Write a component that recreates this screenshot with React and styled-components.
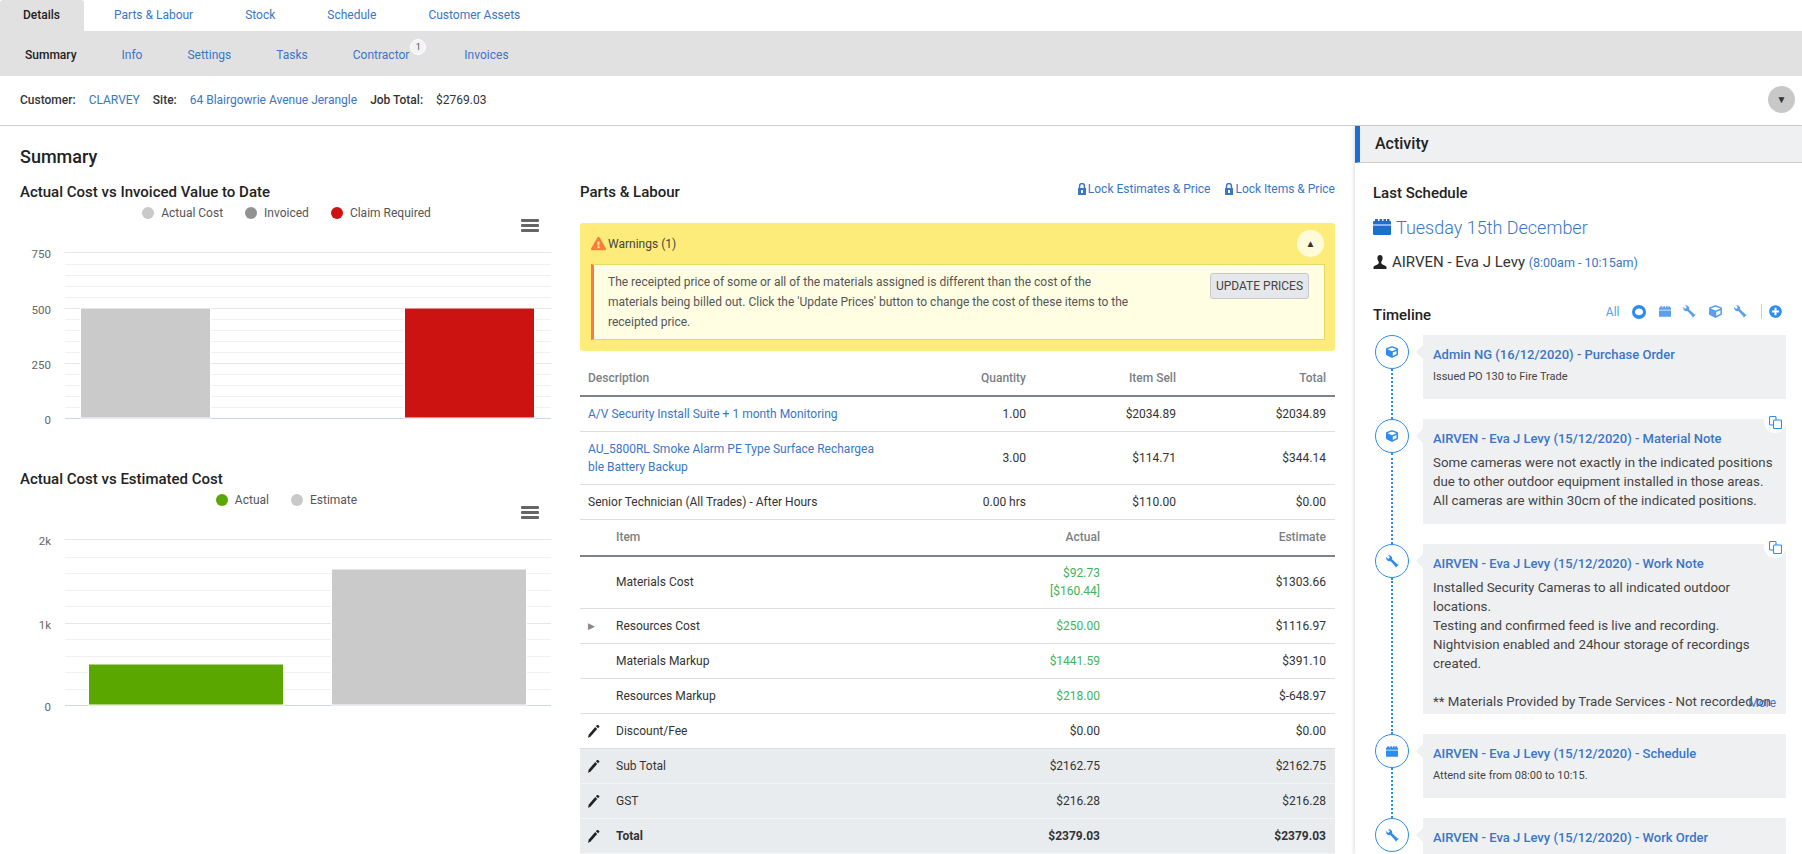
import React from "react";
import styled, { createGlobalStyle } from "styled-components";
import { FaCube, FaPlusCircle, FaExclamationTriangle } from "react-icons/fa";

const GlobalStyle = createGlobalStyle`
  html, body {
    margin: 0;
    padding: 0;
    height: 100%;
    overflow: hidden;
    background: #fff;
    font-family: Roboto, "Liberation Sans", sans-serif;
    font-size: 12px;
    color: #333;
  }
  * { box-sizing: border-box; }
`;

const LINK = "#3a76c8";
const ICON = "#2d8cf0";

const Page = styled.div`
  width: 1802px;
  height: 854px;
  overflow: hidden;
  display: flex;
  flex-direction: column;
`;

const TabBar = styled.div`
  display: flex;
  height: 31px;
  flex-shrink: 0;
`;

const Tab = styled.div`
  padding: 0 26px;
  line-height: 31px;
  font-size: 12px;
  white-space: nowrap;
  color: ${LINK};
  &:nth-child(2) {
    margin-left: 4px;
  }
`;

const ActiveTab = styled(Tab)`
  width: 84px;
  padding: 0 0 0 23px;
  color: #222;
  font-weight: 500;
  background: #e1e1e1;
  border-radius: 3px 3px 0 0;
`;

const SubBar = styled.div`
  display: flex;
  height: 45px;
  background: #e1e1e1;
  flex-shrink: 0;
  padding: 2px 0 0 25px;
  gap: 45px;
  align-items: center;
`;

const SubTab = styled.div`
  position: relative;
  font-size: 12px;
  color: ${(p) => (p.$active ? "#222" : LINK)};
  font-weight: ${(p) => (p.$active ? 500 : 400)};
  margin-right: ${(p) => (p.$badge ? 10 : 0)}px;
`;

const Badge = styled.span`
  position: absolute;
  top: -9px;
  right: -17px;
  width: 16px;
  height: 16px;
  border-radius: 50%;
  background: #f1f3f5;
  border: 1px solid #fff;
  color: #555;
  font-size: 9px;
  line-height: 14px;
  text-align: center;
`;

const InfoBar = styled.div`
  display: flex;
  height: 50px;
  flex-shrink: 0;
  align-items: center;
  padding: 0 7px 1px 20px;
  border-bottom: 1px solid #cfcfcf;
  font-size: 12px;
`;

const InfoLabel = styled.span`
  font-weight: 500;
  color: #333;
  margin-right: 13px;
`;

const InfoLink = styled.span`
  color: ${LINK};
  margin-right: 13px;
`;

const InfoValue = styled.span`
  color: #333;
`;

const RoundToggle = styled.div`
  width: 27px;
  height: 27px;
  border-radius: 50%;
  background: ${(p) => p.$bg};
  color: #333;
  display: flex;
  align-items: center;
  justify-content: center;
  font-size: 10px;
  margin-left: auto;
  margin-bottom: ${(p) => p.$mb || 0}px;
  flex-shrink: 0;
`;

const Body = styled.div`
  flex: 1;
  display: flex;
  min-height: 0;
`;

const Main = styled.div`
  width: 1355px;
  flex-shrink: 0;
  padding: 20px 20px 0 20px;
`;

const PageTitle = styled.h1`
  margin: 0;
  font-size: 18px;
  font-weight: 500;
  color: #222;
  line-height: 21px;
`;

const Columns = styled.div`
  display: flex;
  margin-top: 15px;
`;

const LeftCol = styled.div`
  width: 540px;
  flex-shrink: 0;
`;

const RightCol = styled.div`
  width: 755px;
  margin-left: 20px;
  flex-shrink: 0;
`;

const ChartBlock = styled.div`
  height: 287px;
`;

const SectionTitle = styled.h3`
  margin: 0;
  font-size: 15px;
  font-weight: 500;
  color: #222;
  line-height: 20px;
`;

const Legend = styled.div`
  display: flex;
  justify-content: center;
  gap: 22px;
  height: 20px;
  align-items: center;
  margin-top: 1px;
  padding-right: 7px;
  color: #555;
  font-size: 12px;
`;

const LegendItem = styled.div`
  display: flex;
  align-items: center;
  gap: 7px;
`;

const Dot = styled.span`
  width: 12px;
  height: 12px;
  border-radius: 50%;
  background: ${(p) => p.$c};
`;

const ChartSvg = styled.svg`
  display: block;
  width: 540px;
  overflow: visible;
`;

const AxisLabel = styled.text`
  font-size: 11.5px;
  fill: #666;
  text-anchor: end;
`;

const PartsHead = styled.div`
  display: flex;
  justify-content: space-between;
  height: 41px;
`;

const LockLinks = styled.div`
  display: flex;
  align-items: flex-start;
  gap: 15px;
  color: ${LINK};
  font-size: 12px;
  line-height: 14px;
`;

const LockLink = styled.span`
  display: flex;
  align-items: center;
  gap: 2px;
`;

const WarnBox = styled.div`
  background: #feec7a;
  border-radius: 3px;
  height: 128px;
  padding: 0 10px 0 11px;
`;

const WarnHead = styled.div`
  display: flex;
  align-items: center;
  height: 41px;
  gap: 2px;
  padding: 0 1px 0 0;
  font-size: 12px;
  color: #444;
`;

const WarnBody = styled.div`
  display: flex;
  height: 76px;
  background: #fffee3;
  border: 1px solid #e3d96b;
  border-left: 3px solid #fb7a3c;
  padding: 8px 15px 0 14px;
  justify-content: space-between;
`;

const WarnText = styled.p`
  margin: -1px 0 0;
  width: 535px;
  font-size: 12px;
  line-height: 20px;
  color: #555;
`;

const UpdateBtn = styled.button`
  width: 99px;
  height: 26px;
  background: #e6e7ea;
  border: 1px solid #c6c8cc;
  border-radius: 3px;
  font-family: inherit;
  font-size: 12px;
  color: #444;
  padding: 0;
`;

const Table = styled.table`
  width: 100%;
  margin-top: ${(p) => p.$mt || 0}px;
  border-collapse: collapse;
  table-layout: fixed;
  font-size: 12px;
`;

const Col = styled.col`
  width: ${(p) => p.$w}px;
`;

const Th = styled.th`
  height: 36px;
  padding: ${(p) => (p.$flush ? "0 9px 0 0" : "0 9px 0 8px")};
  text-align: ${(p) => (p.$right ? "right" : "left")};
  font-weight: 500;
  color: #7b7f83;
  border-bottom: 2px solid #7f8386;
`;

const Row = styled.tr`
  background: ${(p) => (p.$shade ? "#e9ecef" : "transparent")};
  border-bottom: 1px solid ${(p) => (p.$shade ? "#f4f5f6" : "#dedede")};
`;

const Td = styled.td`
  height: ${(p) => p.$h || 35}px;
  padding: ${(p) => (p.$flush ? "0 9px 0 0" : "0 9px 0 8px")};
  text-align: ${(p) => (p.$right ? "right" : "left")};
  color: ${(p) => (p.$green ? "#41b35b" : p.$link ? LINK : "#333")};
  font-weight: ${(p) => (p.$bold ? 700 : 400)};
  line-height: 18px;
  word-break: break-all;
`;

const IconCell = styled.span`
  display: inline-flex;
  color: ${(p) => p.$c || "#222"};
  font-size: ${(p) => p.$s || 12}px;
  vertical-align: middle;
`;

const Panel = styled.div`
  flex: 1;
  box-shadow: -2px 0 3px rgba(0, 0, 0, 0.09);
  min-width: 0;
`;

const PanelHead = styled.div`
  height: 37px;
  background: #eff0f2;
  border-left: 5px solid #1b6fd1;
  border-bottom: 1px solid #cfcfcf;
  padding-left: 15px;
  line-height: 35px;
  font-size: 16px;
  font-weight: 500;
  color: #222;
`;

const PanelBody = styled.div`
  padding: 20px 16px 0 18px;
`;

const PanelTitle = styled.div`
  font-size: 15px;
  font-weight: 500;
  color: #222;
  line-height: 20px;
`;

const ScheduleDate = styled.div`
  display: flex;
  align-items: center;
  gap: 5px;
  margin-top: 12px;
  height: 24px;
  font-size: 18px;
  font-weight: 300;
  color: ${LINK};
`;

const ScheduleWho = styled.div`
  display: flex;
  align-items: center;
  gap: 5px;
  margin-top: 12px;
  height: 22px;
  font-size: 15px;
  color: #333;
`;

const ScheduleTime = styled.span`
  font-size: 12.5px;
  color: ${LINK};
`;

const TimelineHead = styled.div`
  display: flex;
  align-items: center;
  justify-content: space-between;
  margin-top: 32px;
  height: 20px;
  padding-right: 4px;
`;

const FilterRow = styled.div`
  display: flex;
  align-items: center;
  gap: 12.5px;
  color: #5aa0f2;
  font-size: 12px;
  margin-top: -7px;
`;

const Separator = styled.span`
  width: 1px;
  height: 15px;
  background: #ccc;
  margin: 0 -5px 0 1px;
`;

const Timeline = styled.div`
  margin-top: 10px;
  display: flex;
  flex-direction: column;
  gap: 20px;
`;

const Entry = styled.div`
  display: flex;
  position: relative;
`;

const NodeCol = styled.div`
  width: 50px;
  flex-shrink: 0;
  padding-left: 2px;
  position: relative;
`;

const Node = styled.div`
  width: 34px;
  height: 34px;
  border: 1.5px solid #2d8cf0;
  border-radius: 50%;
  display: flex;
  align-items: center;
  justify-content: center;
  background: #fff;
  color: ${ICON};
  font-size: 12px;
`;

const Connector = styled.div`
  position: absolute;
  left: 18px;
  top: 34px;
  bottom: -20px;
  border-left: 2px dotted #2d8cf0;
`;

const Card = styled.div`
  position: relative;
  flex: 1;
  min-width: 0;
  height: ${(p) => p.$h}px;
  background: #eff0f2;
  padding: 11px 10px 4px 10px;
  &::before {
    content: "";
    position: absolute;
    left: -7px;
    top: 10px;
    border-top: 7px solid transparent;
    border-bottom: 7px solid transparent;
    border-right: 7px solid #eff0f2;
  }
`;

const CardClip = styled.div`
  overflow: hidden;
  height: 100%;
`;

const CardTitle = styled.div`
  color: ${LINK};
  font-size: 13px;
  font-weight: 500;
  line-height: 18px;
`;

const CardNote = styled.div`
  font-size: ${(p) => (p.$small ? 11 : 13.3)}px;
  line-height: 19px;
  color: #444;
  margin-top: ${(p) => (p.$small ? 3 : 5)}px;
  white-space: pre-line;
`;

const CopyBtn = styled.span`
  position: absolute;
  top: -8px;
  right: 0;
  width: 22px;
  height: 22px;
  border-radius: 50%;
  background: #fff;
  color: ${ICON};
  display: flex;
  align-items: center;
  justify-content: center;
`;

const More = styled.span`
  position: absolute;
  right: 10px;
  bottom: 4px;
  font-size: 12px;
  color: ${LINK};
`;

const Hamburger = styled.svg`
  position: absolute;
  top: -4px;
  right: 21px;
`;

const ChartWrap = styled.div`
  position: relative;
`;

const CalendarIcon = ({ w = 12, h = 11, color = "currentColor" }) => (
  <svg width={w} height={h} viewBox="0 0 18 16" fill={color}>
    <path d="M0 6.5h18V15a1 1 0 0 1-1 1H1a1 1 0 0 1-1-1z" />
    <path d="M0 3a1 1 0 0 1 1-1h1V0h3v2h1.5V0h2.700v2h1.300V0H13v2h1V0h2.500v2h.5a1 1 0 0 1 1 1v2.500H0z" />
  </svg>
);

const LockIcon = () => (
  <svg width="8" height="12" viewBox="0 0 8 12" fill={LINK}>
    <path d="M.8 5V3a3.200 3.200 0 0 1 6.400 0v2h.8v7H0V5zm1.500 0h3.400V3a1.700 1.700 0 0 0-3.400 0z" />
    <rect x="3" y="7" width="2" height="3" fill="#fff" />
  </svg>
);

const UserIcon = () => (
  <svg width="14" height="14" viewBox="0 0 14 14" fill="#222">
    <path d="M7 0c1.500 0 2.600 1.200 2.600 3 0 1.400-.5 2.800-1.300 3.600v1.700c.4 1.500 4.700 2.200 5.200 3.700v2H.5v-2c.5-1.500 4.800-2.200 5.200-3.700V6.600C4.900 5.800 4.400 4.400 4.400 3 4.400 1.200 5.500 0 7 0z" />
  </svg>
);

const PencilIcon = () => (
  <svg width="12" height="13" viewBox="0 0 12 13" fill="currentColor">
    <path d="M0 13l.8-3.600 6.400-7.300 2 1.800-6.400 7.300z" />
    <path d="M7.900 1.300L9 0c.3-.2.7-.2 1 0l1.200 1c.3.300.3.700.1 1l-1.200 1.300z" />
  </svg>
);

const RingIcon = () => (
  <svg width="14" height="14" viewBox="0 0 14 14">
    <circle cx="7" cy="7" r="7" fill="#2d8cf0" />
    <path
      fill="#fff"
      transform="translate(7 7) scale(.85) translate(-7 -7)"
      d="M7 2.600l1.300.8 1.500-.2.700 1.400 1.300.8-.3 1.500.3 1.500-1.300.7-.7 1.300-1.500-.1-1.300.8-1.300-.8-1.500.1-.7-1.300-1.300-.7.3-1.500-.3-1.500 1.300-.8.7-1.400 1.500.2z"
    />
  </svg>
);

const CopyIcon = () => (
  <svg width="13" height="13" viewBox="0 0 13 13" fill="none" stroke="currentColor" strokeWidth="1.100">
    <path d="M4.500 9H1.500a1 1 0 0 1-1-1V1.500a1 1 0 0 1 1-1H6a1 1 0 0 1 1 1V4" />
    <rect x="4.500" y="4" width="8" height="8.500" rx="1" />
  </svg>
);

const Wrench = ({ size = 13 }) => (
  <svg width={size} height={size} viewBox="0 0 14 14" fill="currentColor">
    <path d="M.4 2.200L2.400 4.200 4.200 2.400 2.200.4A3.400 3.400 0 0 1 6.500 4.700L12.500 10.200 13.800 10 13 11.200 11.200 13 10 13.800 10.200 12.500 4.700 6.500A3.400 3.400 0 0 1 .4 2.200z" />
  </svg>
);

const Chart = ({ height, axis, minor, bars }) => (
  <ChartSvg height={height} viewBox={`0 0 540 ${height}`}>
    {minor.map((y) => (
      <line key={y} x1="45" x2="531" y1={y} y2={y} stroke="#f1f1f1" strokeWidth="1" />
    ))}
    {axis.map((a) => (
      <g key={a.label}>
        <line x1="45" x2="531" y1={a.y} y2={a.y} stroke={a.base ? "#ccd6eb" : "#e6e6e6"} strokeWidth="1" />
        <AxisLabel x="31" y={a.y + 5}>
          {a.label}
        </AxisLabel>
      </g>
    ))}
    {bars.map((b) => (
      <rect key={b.x} x={b.x} y={b.y} width={b.w} height={b.h} fill={b.c} stroke="#fff" strokeWidth="1" />
    ))}
  </ChartSvg>
);

const Menu = () => (
  <Hamburger width="18" height="14" viewBox="0 0 18 14" fill="#666">
    <rect y="0" width="18" height="3" rx="1" />
    <rect y="5" width="18" height="3" rx="1" />
    <rect y="10" width="18" height="3" rx="1" />
  </Hamburger>
);

const costRows = [
  { label: "Resources Cost", actual: "$250.00", est: "$1116.97", green: true, arrow: true },
  { label: "Materials Markup", actual: "$1441.59", est: "$391.10", green: true },
  { label: "Resources Markup", actual: "$218.00", est: "$-648.97", green: true },
  { label: "Discount/Fee", actual: "$0.00", est: "$0.00", pencil: true },
  { label: "Sub Total", actual: "$2162.75", est: "$2162.75", pencil: true, shade: true },
  { label: "GST", actual: "$216.28", est: "$216.28", pencil: true, shade: true },
  { label: "Total", actual: "$2379.03", est: "$2379.03", pencil: true, shade: true, bold: true },
];

const entries = [
  {
    h: 64,
    icon: <FaCube size={12} />,
    title: "Admin NG (16/12/2020) - Purchase Order",
    small: true,
    text: "Issued PO 130 to Fire Trade",
  },
  {
    h: 105,
    icon: <FaCube size={12} />,
    copy: true,
    title: "AIRVEN - Eva J Levy (15/12/2020) - Material Note",
    text: "Some cameras were not exactly in the indicated positions due to other outdoor equipment installed in those areas.\nAll cameras are within 30cm of the indicated positions.",
  },
  {
    h: 170,
    icon: <Wrench />,
    copy: true,
    more: true,
    title: "AIRVEN - Eva J Levy (15/12/2020) - Work Note",
    text: "Installed Security Cameras to all indicated outdoor locations.\nTesting and confirmed feed is live and recording.\nNightvision enabled and 24hour storage of recordings created.\n\n** Materials Provided by Trade Services - Not recorded on",
  },
  {
    h: 64,
    icon: <CalendarIcon />,
    title: "AIRVEN - Eva J Levy (15/12/2020) - Schedule",
    small: true,
    text: "Attend site from 08:00 to 10:15.",
  },
  {
    h: 64,
    icon: <Wrench />,
    title: "AIRVEN - Eva J Levy (15/12/2020) - Work Order",
    small: true,
    text: "",
    last: true,
  },
];

export default function App() {
  return (
    <Page>
      <GlobalStyle />
      <TabBar>
        <ActiveTab>Details</ActiveTab>
        <Tab>Parts &amp; Labour</Tab>
        <Tab>Stock</Tab>
        <Tab>Schedule</Tab>
        <Tab>Customer Assets</Tab>
      </TabBar>
      <SubBar>
        <SubTab $active>Summary</SubTab>
        <SubTab>Info</SubTab>
        <SubTab>Settings</SubTab>
        <SubTab>Tasks</SubTab>
        <SubTab $badge>Contractor<Badge>1</Badge></SubTab>
        <SubTab>Invoices</SubTab>
      </SubBar>
      <InfoBar>
        <InfoLabel>Customer:</InfoLabel>
        <InfoLink>CLARVEY</InfoLink>
        <InfoLabel>Site:</InfoLabel>
        <InfoLink>64 Blairgowrie Avenue Jerangle</InfoLink>
        <InfoLabel>Job Total:</InfoLabel>
        <InfoValue>$2769.03</InfoValue>
        <RoundToggle $bg="#c8c8c8" $mb={2}>▼</RoundToggle>
      </InfoBar>
      <Body>
        <Main>
          <PageTitle>Summary</PageTitle>
          <Columns>
            <LeftCol>
              <ChartBlock>
                <SectionTitle>Actual Cost vs Invoiced Value to Date</SectionTitle>
                <Legend>
                  <LegendItem><Dot $c="#c9c9c9" />Actual Cost</LegendItem>
                  <LegendItem><Dot $c="#929292" />Invoiced</LegendItem>
                  <LegendItem><Dot $c="#cd1212" />Claim Required</LegendItem>
                </Legend>
                <ChartWrap>
                  <Menu />
                  <Chart
                    height={200}
                    axis={[
                      { label: "750", y: 29.5 },
                      { label: "500", y: 85.5 },
                      { label: "250", y: 140.5 },
                      { label: "0", y: 195.5, base: true },
                    ]}
                    minor={[41, 52, 63, 74, 96, 107, 118, 129, 151, 162, 173, 184].map((v) => v + 0.5)}
                    bars={[
                      { x: 60.5, y: 85, w: 130, h: 110, c: "#cacaca" },
                      { x: 384.5, y: 85, w: 130, h: 110, c: "#cd1212" },
                    ]}
                  />
                </ChartWrap>
              </ChartBlock>
              <SectionTitle>Actual Cost vs Estimated Cost</SectionTitle>
              <Legend>
                <LegendItem><Dot $c="#5aa700" />Actual</LegendItem>
                <LegendItem><Dot $c="#c9c9c9" />Estimate</LegendItem>
              </Legend>
              <ChartWrap>
                <Menu />
                <Chart
                  height={200}
                  axis={[
                    { label: "2k", y: 29.5 },
                    { label: "1k", y: 113.5 },
                    { label: "0", y: 195.5, base: true },
                  ]}
                  minor={[47, 63, 80, 96, 129, 146, 162, 179].map((v) => v + 0.5)}
                  bars={[
                    { x: 68.5, y: 154, w: 195, h: 41, c: "#5aa700" },
                    { x: 311.5, y: 59, w: 195, h: 136, c: "#cacaca" },
                  ]}
                />
              </ChartWrap>
            </LeftCol>
            <RightCol>
              <PartsHead>
                <SectionTitle>Parts &amp; Labour</SectionTitle>
                <LockLinks>
                  <LockLink><LockIcon />Lock Estimates &amp; Price</LockLink>
                  <LockLink><LockIcon />Lock Items &amp; Price</LockLink>
                </LockLinks>
              </PartsHead>
              <WarnBox>
                <WarnHead>
                  <IconCell $c="#fb7a3c" $s={15}><FaExclamationTriangle /></IconCell>
                  Warnings (1)
                  <RoundToggle $bg="#fffbd9">▲</RoundToggle>
                </WarnHead>
                <WarnBody>
                  <WarnText>
                    The receipted price of some or all of the materials assigned is different than the cost of the materials being billed out. Click the 'Update Prices' button to change the cost of these items to the receipted price.
                  </WarnText>
                  <UpdateBtn>UPDATE PRICES</UpdateBtn>
                </WarnBody>
              </WarnBox>
              <Table $mt={9}>
                <colgroup>
                  <Col $w={305} />
                  <Col $w={150} />
                  <Col $w={150} />
                  <Col $w={150} />
                </colgroup>
                <thead>
                  <tr>
                    <Th>Description</Th>
                    <Th $right>Quantity</Th>
                    <Th $right>Item Sell</Th>
                    <Th $right>Total</Th>
                  </tr>
                </thead>
                <tbody>
                  <Row>
                    <Td $link>A/V Security Install Suite + 1 month Monitoring</Td>
                    <Td $right>1.00</Td>
                    <Td $right>$2034.89</Td>
                    <Td $right>$2034.89</Td>
                  </Row>
                  <Row>
                    <Td $link $h={53}>AU_5800RL Smoke Alarm PE Type Surface Rechargeable Battery Backup</Td>
                    <Td $right>3.00</Td>
                    <Td $right>$114.71</Td>
                    <Td $right>$344.14</Td>
                  </Row>
                  <Row>
                    <Td>Senior Technician (All Trades) - After Hours</Td>
                    <Td $right>0.00 hrs</Td>
                    <Td $right>$110.00</Td>
                    <Td $right>$0.00</Td>
                  </Row>
                </tbody>
              </Table>
              <Table>
                <colgroup>
                  <Col $w={36} />
                  <Col $w={254} />
                  <Col $w={239} />
                  <Col $w={226} />
                </colgroup>
                <thead>
                  <tr>
                    <Th />
                    <Th $flush>Item</Th>
                    <Th $right>Actual</Th>
                    <Th $right>Estimate</Th>
                  </tr>
                </thead>
                <tbody>
                  <Row>
                    <Td $h={53} />
                    <Td $h={53} $flush>Materials Cost</Td>
                    <Td $right $green>$92.73<br />[$160.44]</Td>
                    <Td $right>$1303.66</Td>
                  </Row>
                  {costRows.map((r) => (
                    <Row key={r.label} $shade={r.shade}>
                      <Td>
                        {r.pencil && <IconCell><PencilIcon /></IconCell>}
                        {r.arrow && <IconCell $c="#888" $s={9}>▶</IconCell>}
                      </Td>
                      <Td $bold={r.bold} $flush>{r.label}</Td>
                      <Td $right $green={r.green} $bold={r.bold}>{r.actual}</Td>
                      <Td $right $bold={r.bold}>{r.est}</Td>
                    </Row>
                  ))}
                </tbody>
              </Table>
            </RightCol>
          </Columns>
        </Main>
        <Panel>
          <PanelHead>Activity</PanelHead>
          <PanelBody>
            <PanelTitle>Last Schedule</PanelTitle>
            <ScheduleDate><CalendarIcon w={18} h={16} color="#1b6fd1" />Tuesday 15th December</ScheduleDate>
            <ScheduleWho>
              <UserIcon />
              <span>AIRVEN - Eva J Levy <ScheduleTime>(8:00am - 10:15am)</ScheduleTime></span>
            </ScheduleWho>
            <TimelineHead>
              <PanelTitle>Timeline</PanelTitle>
              <FilterRow>
                <span>All</span>
                <RingIcon />
                <CalendarIcon />
                <Wrench />
                <FaCube size={13} />
                <Wrench />
                <Separator />
                <FaPlusCircle size={13} color="#2d8cf0" />
              </FilterRow>
            </TimelineHead>
            <Timeline>
              {entries.map((e) => (
                <Entry key={e.title}>
                  <NodeCol>
                    <Node>{e.icon}</Node>
                    {!e.last && <Connector />}
                  </NodeCol>
                  <Card $h={e.h}>
                    {e.copy && <CopyBtn><CopyIcon /></CopyBtn>}
                    <CardClip>
                      <CardTitle>{e.title}</CardTitle>
                      <CardNote $small={e.small}>{e.text}</CardNote>
                    </CardClip>
                    {e.more && <More>More</More>}
                  </Card>
                </Entry>
              ))}
            </Timeline>
          </PanelBody>
        </Panel>
      </Body>
    </Page>
  );
}
